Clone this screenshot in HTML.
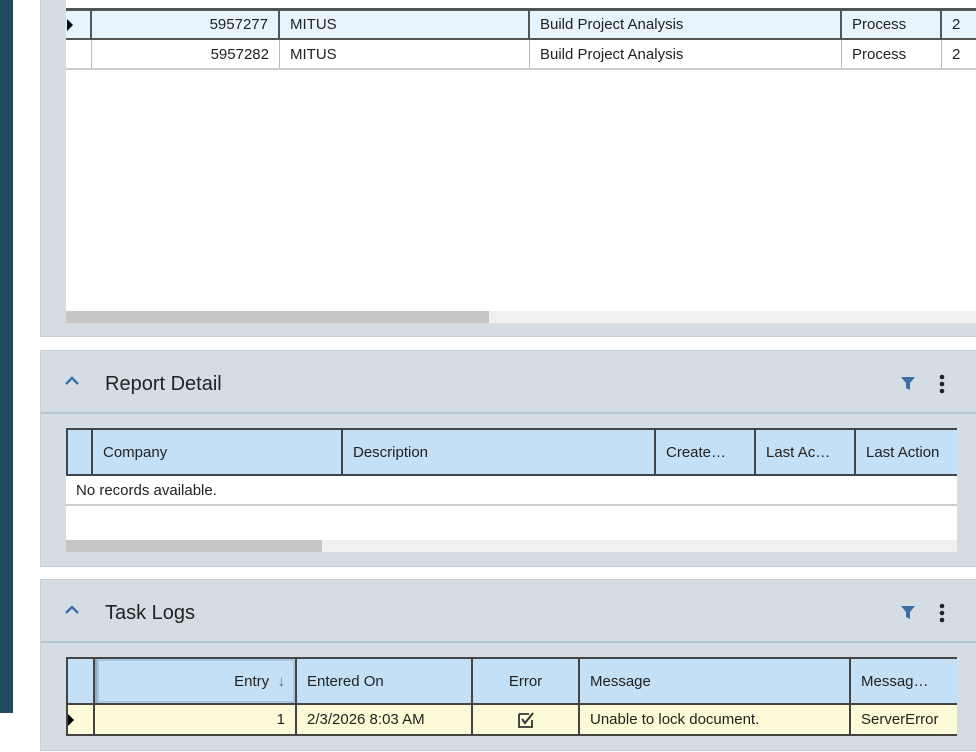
<!DOCTYPE html>
<html><head><style>
*{box-sizing:border-box;margin:0;padding:0}
body{width:976px;height:752px;overflow:hidden;background:#fff;font-family:"Liberation Sans",sans-serif;font-size:15px;color:#222;position:relative}
.abs{position:absolute}
.bar{left:0;top:0;width:13px;height:713px;background:#224a5f}
.panel{left:40px;width:940px;background:#d3dde3;border:1px solid #c6d0d6}
.hdr{position:absolute;left:0;right:0;height:63px;border-bottom:2px solid #b3c8d3}
.title{position:absolute;left:64px;top:22px;font-size:20px;color:#222}
.chev{position:absolute;left:24px;top:25px}
.filt{position:absolute;left:860px;top:25px}
.dots{position:absolute;left:898px;top:23px}
.c{position:absolute;height:100%;border-right:2px solid #444;padding:0 10px;display:flex;align-items:center;white-space:nowrap;overflow:hidden}
.gh{position:absolute;background:#c3e0f7;border:2px solid #444}
.r{justify-content:flex-end}
.ce{justify-content:center}
.lc{border-right:1px solid #bbb}
</style></head><body>
<div class="abs bar"></div>

<div class="abs panel" style="top:-2px;height:339px">
  <div class="abs" style="left:25px;top:0;width:915px;height:324px;background:#fff"></div>
  <div class="abs" style="left:25px;top:0;width:915px;height:11px;border-bottom:2px solid #555"></div>
  <div class="abs" style="left:25px;top:10px;width:915px;height:31px;background:#e8f4fd;border:2px solid #555;border-left:none">
    <div class="c" style="left:0;width:26px;border-right:2px solid #555"><svg width="6" height="12" style="margin-left:-9px"><path d="M0 0L6 6L0 12Z" fill="#000"/></svg></div>
    <div class="c r" style="left:26px;width:188px;border-right:2px solid #555">5957277</div>
    <div class="c" style="left:214px;width:250px;border-right:2px solid #555">MITUS</div>
    <div class="c" style="left:464px;width:312px;border-right:2px solid #555">Build Project Analysis</div>
    <div class="c" style="left:776px;width:100px;border-right:2px solid #555">Process</div>
    <div class="c" style="left:876px;width:40px;border:none">2</div>
  </div>
  <div class="abs" style="left:25px;top:41px;width:915px;height:30px;border-bottom:2px solid #ccc">
    <div class="c lc" style="left:0;width:26px"></div>
    <div class="c r lc" style="left:26px;width:188px">5957282</div>
    <div class="c lc" style="left:214px;width:250px">MITUS</div>
    <div class="c lc" style="left:464px;width:312px">Build Project Analysis</div>
    <div class="c lc" style="left:776px;width:100px">Process</div>
    <div class="c" style="left:876px;width:40px;border:none">2</div>
  </div>
  <div class="abs" style="left:25px;top:312px;width:915px;height:12px;background:#f0f0f0"></div>
  <div class="abs" style="left:25px;top:312px;width:423px;height:12px;background:#c6c6c6"></div>
</div>

<div class="abs panel" style="top:350px;height:217px">
  <div class="hdr" style="top:0">
    <svg class="chev" width="14" height="9"><path d="M1 8L7 2L13 8" stroke="#3c6ea5" stroke-width="2.4" fill="none"/></svg>
    <div class="title">Report Detail</div>
    <svg class="filt" width="14" height="14"><path d="M0 1H14L9 7V14L5 12V7Z" fill="#3c6ea5"/></svg>
    <svg class="dots" width="6" height="20"><circle cx="3" cy="3" r="2.3" fill="#222"/><circle cx="3" cy="10" r="2.3" fill="#222"/><circle cx="3" cy="17" r="2.3" fill="#222"/></svg>
  </div>
  <div class="abs" style="left:25px;top:77px;width:891px;height:124px;background:#fff"></div>
  <div class="gh" style="left:25px;top:77px;width:891px;height:48px;border-right:none">
    <div class="c" style="left:0;width:25px"></div>
    <div class="c" style="left:25px;width:250px">Company</div>
    <div class="c" style="left:275px;width:313px">Description</div>
    <div class="c" style="left:588px;width:100px">Create…</div>
    <div class="c" style="left:688px;width:100px">Last Ac…</div>
    <div class="c" style="left:788px;width:101px;border:none">Last Action</div>
  </div>
  <div class="abs" style="left:25px;top:125px;width:891px;height:30px;border-bottom:2px solid #ccc;padding:6px 10px">No records available.</div>
  <div class="abs" style="left:25px;top:189px;width:891px;height:12px;background:#f0f0f0"></div>
  <div class="abs" style="left:25px;top:189px;width:256px;height:12px;background:#c6c6c6"></div>
</div>

<div class="abs panel" style="top:579px;height:172px">
  <div class="hdr" style="top:0">
    <svg class="chev" width="14" height="9"><path d="M1 8L7 2L13 8" stroke="#3c6ea5" stroke-width="2.4" fill="none"/></svg>
    <div class="title">Task Logs</div>
    <svg class="filt" width="14" height="14"><path d="M0 1H14L9 7V14L5 12V7Z" fill="#3c6ea5"/></svg>
    <svg class="dots" width="6" height="20"><circle cx="3" cy="3" r="2.3" fill="#222"/><circle cx="3" cy="10" r="2.3" fill="#222"/><circle cx="3" cy="17" r="2.3" fill="#222"/></svg>
  </div>
  <div class="gh" style="left:25px;top:77px;width:891px;height:48px;border-right:none">
    <div class="c" style="left:0;width:27px"></div>
    <div class="c r" style="left:27px;width:202px;border-left:2px solid #9ab;box-shadow:inset 0 0 0 2px #a8c8e0">Entry&nbsp;&nbsp;<span style="color:#666">↓</span></div>
    <div class="c" style="left:229px;width:176px">Entered On</div>
    <div class="c ce" style="left:405px;width:107px">Error</div>
    <div class="c" style="left:512px;width:271px">Message</div>
    <div class="c" style="left:783px;width:106px;border:none">Messag…</div>
  </div>
  <div class="abs" style="left:25px;top:125px;width:891px;height:31px;background:#fdfbd7;border:2px solid #444;border-top:none;border-right:none">
    <div class="c" style="left:0;width:27px"><svg width="6" height="12" style="margin-left:-10px"><path d="M0 0L6 6L0 12Z" fill="#000"/></svg></div>
    <div class="c r" style="left:27px;width:202px">1</div>
    <div class="c" style="left:229px;width:176px">2/3/2026 8:03 AM</div>
    <div class="c ce" style="left:405px;width:107px"><svg width="18" height="18"><path d="M2 3H12M2 3V16H15V9" stroke="#333" stroke-width="1.8" fill="none"/><path d="M5 8L8 12L16 2" stroke="#333" stroke-width="2" fill="none"/></svg></div>
    <div class="c" style="left:512px;width:271px">Unable to lock document.</div>
    <div class="c" style="left:783px;width:106px;border:none">ServerError</div>
  </div>
</div>
</body></html>
